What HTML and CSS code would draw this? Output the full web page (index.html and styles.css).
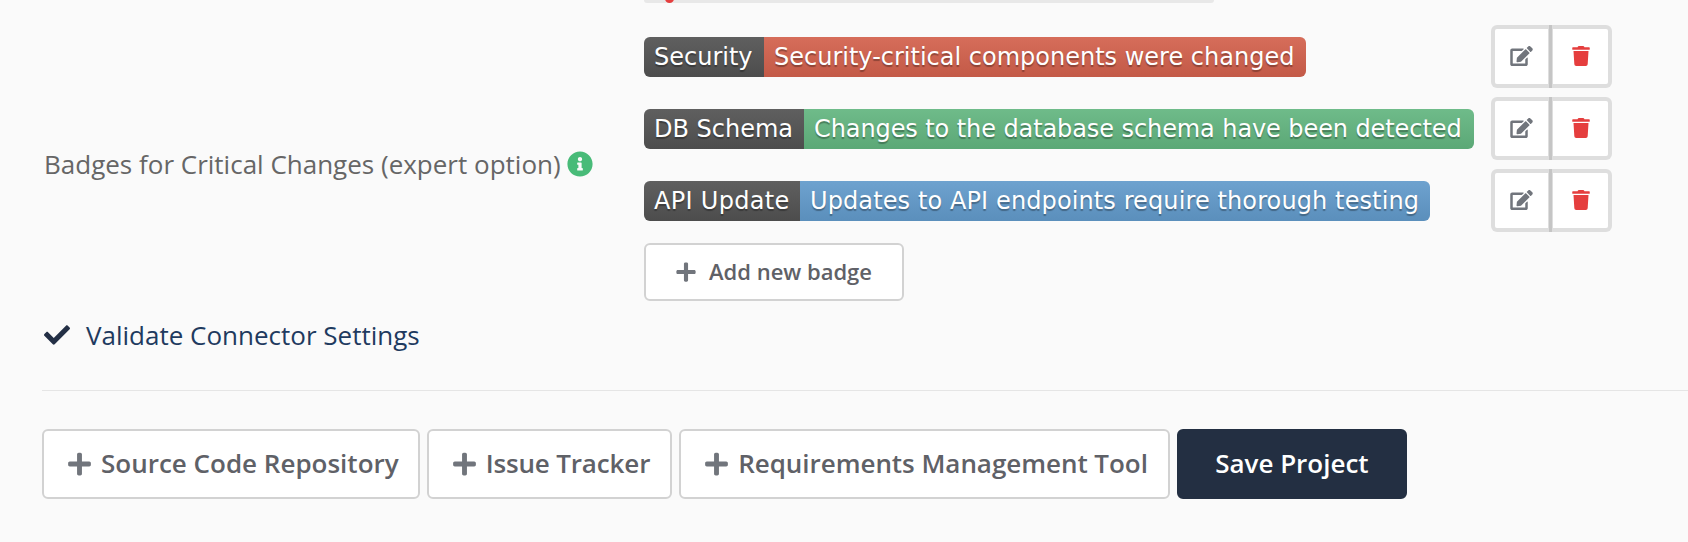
FILE: index.html
```html
<!DOCTYPE html>
<html lang="en">
<head>
<meta charset="utf-8">
<title>Project settings</title>
<link rel="stylesheet" href="styles.css">
</head>
<body>
<main class="page">
  <section class="field">
    <div class="field-label">
      <span>Badges for Critical Changes (expert option)</span>
      <svg class="info" viewBox="0 0 512 512"><path d="M256 8C119.043 8 8 119.083 8 256c0 136.997 111.043 248 248 248s248-111.003 248-248C504 119.083 392.957 8 256 8zm0 110c23.196 0 42 18.804 42 42s-18.804 42-42 42-42-18.804-42-42 18.804-42 42-42zm56 254c0 6.627-5.373 12-12 12h-88c-6.627 0-12-5.373-12-12v-24c0-6.627 5.373-12 12-12h12v-64h-12c-6.627 0-12-5.373-12-12v-24c0-6.627 5.373-12 12-12h64c6.627 0 12 5.373 12 12v100h12c6.627 0 12 5.373 12 12v24z"/></svg>
    </div>
    <div class="field-body">
      <div class="sliver"><span class="sliver-dot"></span></div>
      <div class="badge-row">
        <div class="badge"><span class="badge-key key-security">Security</span><span class="badge-val red">Security-critical components were changed</span></div>
        <div class="actions">
          <button class="act"><svg class="ic-edit" viewBox="0 0 576 512"><path d="M402.6 83.2l90.2 90.2c3.8 3.8 3.8 10 0 13.8L274.4 405.6l-92.8 10.3c-12.4 1.4-22.9-9.1-21.5-21.5l10.3-92.8L388.8 83.2c3.8-3.8 10-3.8 13.8 0zm162-22.9l-48.8-48.8c-15.2-15.2-39.9-15.2-55.2 0l-35.4 35.4c-3.8 3.8-3.8 10 0 13.8l90.2 90.2c3.8 3.8 10 3.8 13.8 0l35.4-35.4c15.2-15.3 15.2-40 0-55.2zM384 346.2V448H64V128h229.8c3.2 0 6.2-1.3 8.5-3.5l40-40c7.6-7.6 2.2-20.5-8.5-20.5H48C21.5 64 0 85.5 0 112v352c0 26.5 21.5 48 48 48h352c26.5 0 48-21.5 48-48V306.2c0-10.7-12.9-16-20.5-8.5l-40 40c-2.2 2.3-3.5 5.3-3.5 8.5z"/></svg></button>
          <button class="act"><svg class="ic-trash" viewBox="0 0 448 512"><path d="M432 32H312l-9.4-18.7A24 24 0 0 0 281.1 0H166.8a23.72 23.72 0 0 0-21.4 13.3L136 32H16A16 16 0 0 0 0 48v32a16 16 0 0 0 16 16h416a16 16 0 0 0 16-16V48a16 16 0 0 0-16-16zM53.2 467a48 48 0 0 0 47.9 45h245.8a48 48 0 0 0 47.9-45L416 128H32z"/></svg></button>
        </div>
      </div>
      <div class="badge-row">
        <div class="badge"><span class="badge-key key-db">DB Schema</span><span class="badge-val green">Changes to the database schema have been detected</span></div>
        <div class="actions">
          <button class="act"><svg class="ic-edit" viewBox="0 0 576 512"><path d="M402.6 83.2l90.2 90.2c3.8 3.8 3.8 10 0 13.8L274.4 405.6l-92.8 10.3c-12.4 1.4-22.9-9.1-21.5-21.5l10.3-92.8L388.8 83.2c3.8-3.8 10-3.8 13.8 0zm162-22.9l-48.8-48.8c-15.2-15.2-39.9-15.2-55.2 0l-35.4 35.4c-3.8 3.8-3.8 10 0 13.8l90.2 90.2c3.8 3.8 10 3.8 13.8 0l35.4-35.4c15.2-15.3 15.2-40 0-55.2zM384 346.2V448H64V128h229.8c3.2 0 6.2-1.3 8.5-3.5l40-40c7.6-7.6 2.2-20.5-8.5-20.5H48C21.5 64 0 85.5 0 112v352c0 26.5 21.5 48 48 48h352c26.5 0 48-21.5 48-48V306.2c0-10.7-12.9-16-20.5-8.5l-40 40c-2.2 2.3-3.5 5.3-3.5 8.5z"/></svg></button>
          <button class="act"><svg class="ic-trash" viewBox="0 0 448 512"><path d="M432 32H312l-9.4-18.7A24 24 0 0 0 281.1 0H166.8a23.72 23.72 0 0 0-21.4 13.3L136 32H16A16 16 0 0 0 0 48v32a16 16 0 0 0 16 16h416a16 16 0 0 0 16-16V48a16 16 0 0 0-16-16zM53.2 467a48 48 0 0 0 47.9 45h245.8a48 48 0 0 0 47.9-45L416 128H32z"/></svg></button>
        </div>
      </div>
      <div class="badge-row">
        <div class="badge"><span class="badge-key key-api">API Update</span><span class="badge-val blue">Updates to API endpoints require thorough testing</span></div>
        <div class="actions">
          <button class="act"><svg class="ic-edit" viewBox="0 0 576 512"><path d="M402.6 83.2l90.2 90.2c3.8 3.8 3.8 10 0 13.8L274.4 405.6l-92.8 10.3c-12.4 1.4-22.9-9.1-21.5-21.5l10.3-92.8L388.8 83.2c3.8-3.8 10-3.8 13.8 0zm162-22.9l-48.8-48.8c-15.2-15.2-39.9-15.2-55.2 0l-35.4 35.4c-3.8 3.8-3.8 10 0 13.8l90.2 90.2c3.8 3.8 10 3.8 13.8 0l35.4-35.4c15.2-15.3 15.2-40 0-55.2zM384 346.2V448H64V128h229.8c3.2 0 6.2-1.3 8.5-3.5l40-40c7.6-7.6 2.2-20.5-8.5-20.5H48C21.5 64 0 85.5 0 112v352c0 26.5 21.5 48 48 48h352c26.5 0 48-21.5 48-48V306.2c0-10.7-12.9-16-20.5-8.5l-40 40c-2.2 2.3-3.5 5.3-3.5 8.5z"/></svg></button>
          <button class="act"><svg class="ic-trash" viewBox="0 0 448 512"><path d="M432 32H312l-9.4-18.7A24 24 0 0 0 281.1 0H166.8a23.72 23.72 0 0 0-21.4 13.3L136 32H16A16 16 0 0 0 0 48v32a16 16 0 0 0 16 16h416a16 16 0 0 0 16-16V48a16 16 0 0 0-16-16zM53.2 467a48 48 0 0 0 47.9 45h245.8a48 48 0 0 0 47.9-45L416 128H32z"/></svg></button>
        </div>
      </div>
      <button class="btn add-badge"><svg class="ic-plus-sm" viewBox="0 0 448 512"><path d="M416 208H272V64c0-17.67-14.33-32-32-32h-32c-17.67 0-32 14.33-32 32v144H32c-17.67 0-32 14.33-32 32v32c0 17.67 14.33 32 32 32h144v144c0 17.67 14.33 32 32 32h32c17.67 0 32-14.33 32-32V304h144c17.67 0 32-14.33 32-32v-32c0-17.67-14.33-32-32-32z"/></svg>Add new badge</button>
    </div>
  </section>
  <div class="validate">
    <svg class="ic-check" viewBox="0 0 512 512"><path d="M173.898 439.404l-166.4-166.4c-9.997-9.997-9.997-26.206 0-36.204l36.203-36.204c9.997-9.998 26.207-9.998 36.204 0L192 312.69 432.095 72.596c9.997-9.997 26.207-9.997 36.204 0l36.203 36.204c9.997 9.997 9.997 26.206 0 36.204l-294.4 294.401c-9.998 9.997-26.207 9.997-36.204-.001z"/></svg>
    <span>Validate Connector Settings</span>
  </div>
  <hr class="rule">
  <div class="toolbar">
    <button class="btn tool tool-source"><svg class="ic-plus" viewBox="0 0 448 512"><path d="M416 208H272V64c0-17.67-14.33-32-32-32h-32c-17.67 0-32 14.33-32 32v144H32c-17.67 0-32 14.33-32 32v32c0 17.67 14.33 32 32 32h144v144c0 17.67 14.33 32 32 32h32c17.67 0 32-14.33 32-32V304h144c17.67 0 32-14.33 32-32v-32c0-17.67-14.33-32-32-32z"/></svg>Source Code Repository</button>
    <button class="btn tool tool-issue"><svg class="ic-plus" viewBox="0 0 448 512"><path d="M416 208H272V64c0-17.67-14.33-32-32-32h-32c-17.67 0-32 14.33-32 32v144H32c-17.67 0-32 14.33-32 32v32c0 17.67 14.33 32 32 32h144v144c0 17.67 14.33 32 32 32h32c17.67 0 32-14.33 32-32V304h144c17.67 0 32-14.33 32-32v-32c0-17.67-14.33-32-32-32z"/></svg>Issue Tracker</button>
    <button class="btn tool tool-req"><svg class="ic-plus" viewBox="0 0 448 512"><path d="M416 208H272V64c0-17.67-14.33-32-32-32h-32c-17.67 0-32 14.33-32 32v144H32c-17.67 0-32 14.33-32 32v32c0 17.67 14.33 32 32 32h144v144c0 17.67 14.33 32 32 32h32c17.67 0 32-14.33 32-32V304h144c17.67 0 32-14.33 32-32v-32c0-17.67-14.33-32-32-32z"/></svg>Requirements Management Tool</button>
    <button class="btn save">Save Project</button>
  </div>
</main>
</body>
</html>
```

FILE: styles.css
```css
* { box-sizing: border-box; }
html, body { margin: 0; height: 100%; overflow: hidden; }
body {
  background: #fafafa;
  font-family: "Open Sans", "Liberation Sans", sans-serif;
  color: #666;
}
.page { padding-left: 42px; }

.field { display: flex; align-items: center; }
.field-label {
  width: 602px;
  padding-left: 2px;
  padding-top: 27px;
  display: flex;
  align-items: center;
  gap: 6px;
  font-size: 26px;
  line-height: 34px;
  color: #666;
}
.info { width: 26px; height: 26px; fill: #48bb78; }
.field-body { display: flex; flex-direction: column; align-items: flex-start; }

.sliver {
  width: 570px;
  height: 3px;
  margin-bottom: 22px;
  background: #e8e8e8;
  border-radius: 0 0 6px 6px;
  position: relative;
  overflow: hidden;
}
.sliver-dot {
  position: absolute;
  left: 21px;
  top: -6px;
  width: 9px;
  height: 9px;
  border-radius: 50%;
  background: #e53e3e;
}

.badge-row {
  width: 968px;
  height: 63px;
  margin-bottom: 9px;
  display: flex;
  align-items: center;
  justify-content: space-between;
}
.badge {
  display: flex;
  height: 40px;
  border-radius: 6px;
  overflow: hidden;
  font-family: "DejaVu Sans", Verdana, sans-serif;
  font-size: 24px;
  line-height: 40px;
  color: #fff;
  text-shadow: 0 2px 1px rgba(1, 1, 1, 0.3);
}
.badge-key, .badge-val {
  padding: 0 10px;
  white-space: nowrap;
  background-image: linear-gradient(rgba(187, 187, 187, 0.1), rgba(0, 0, 0, 0.1));
}
.badge-key { background-color: #555; }
.key-security { width: 120px; }
.key-db { width: 160px; }
.key-api { width: 156px; letter-spacing: 0.3px; }
.red { width: 542px; background-color: #d9644f; }
.green { width: 670px; background-color: #66bb84; letter-spacing: -0.09px; }
.blue { width: 630px; background-color: #659fd1; letter-spacing: 0.11px; }

.actions { display: flex; }
.act {
  width: 61px;
  height: 63px;
  padding: 0;
  display: flex;
  align-items: center;
  justify-content: center;
  background: #fff;
  border: 4px solid rgba(0, 0, 0, 0.11);
  background-clip: padding-box;
  border-radius: 6px 0 0 6px;
}
.act + .act {
  width: 63px;
  margin-left: -3px;
  border-radius: 0 6px 6px 0;
}
.ic-edit { width: 23px; height: 20px; fill: #71757c; margin-top: -1px; }
.ic-trash { width: 18px; height: 20px; fill: #e53e3e; margin-top: -1px; }

.btn {
  display: inline-flex;
  align-items: center;
  justify-content: center;
  background: #fff;
  border: 2px solid #d2d2d2;
  border-radius: 6px;
  font-family: "Open Sans", "Liberation Sans", sans-serif;
  font-weight: 600;
  color: #5f6167;
  padding: 0 0 2px;
  white-space: nowrap;
}
.add-badge {
  width: 260px;
  height: 58px;
  margin-top: 2px;
  font-size: 22px;
}
.ic-plus-sm { width: 20px; height: 22px; margin: 2px 13px 0 0; fill: #71757c; }

.validate {
  display: flex;
  align-items: center;
  height: 34px;
  margin-top: 17px;
  padding-left: 2px;
  gap: 16px;
  font-size: 26px;
  color: #1f3a5f;
}
.ic-check { width: 26px; height: 26px; fill: #232f45; flex: none; }

.rule {
  margin: 38px 0 0;
  border: 0;
  border-top: 1px solid #e5e5e5;
}
.toolbar { display: flex; gap: 7px; margin-top: 38px; }
.tool { height: 70px; padding: 0 20px 2px 24px; font-size: 26px; }
.tool-source { padding-right: 19px; }
.tool-issue { letter-spacing: -0.15px; }
.tool-req { letter-spacing: -0.04px; }
.ic-plus { width: 23px; height: 26px; margin: 2px 10px 0 0; fill: #71757c; }
.save {
  width: 230px;
  height: 70px;
  background: #232f42;
  border-color: #232f42;
  color: #fff;
  font-size: 26px;
}
```
